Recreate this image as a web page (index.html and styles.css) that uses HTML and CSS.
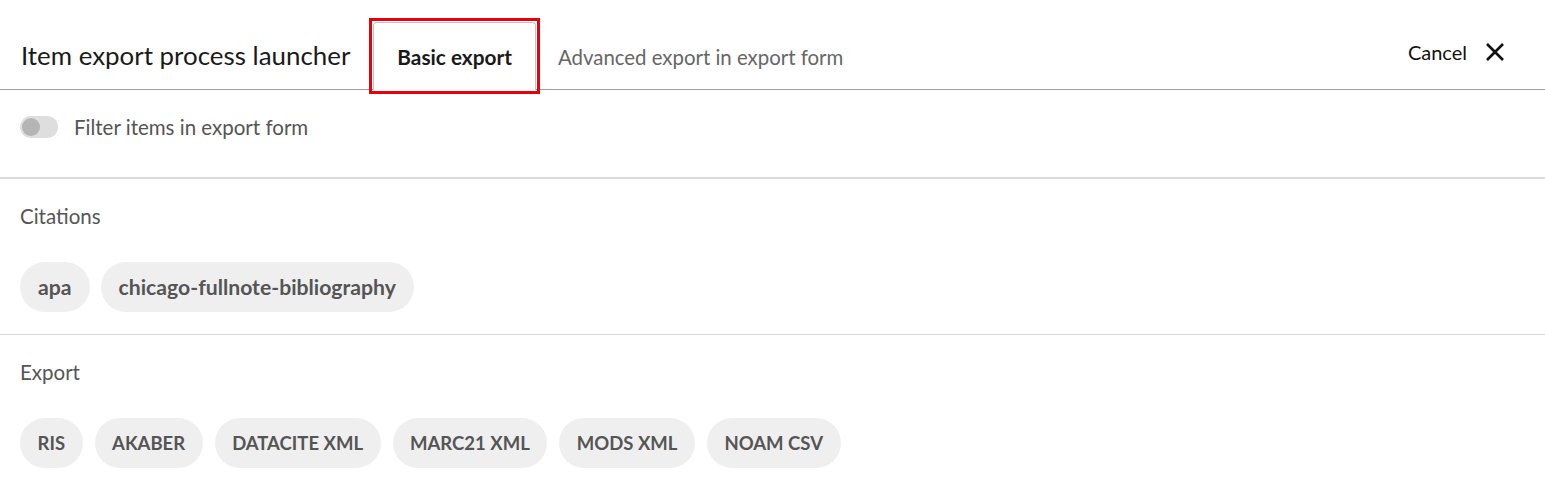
FILE: index.html
```html
<!DOCTYPE html>
<html lang="en">
<head>
<meta charset="utf-8">
<title>Item export process launcher</title>
<link rel="stylesheet" href="styles.css">
</head>
<body>
<div class="modal">
  <header class="modal-header">
    <h4 class="title">Item export process launcher</h4>
    <nav class="tabs">
      <a class="tab active">Basic export</a>
      <a class="tab">Advanced export in export form</a>
    </nav>
    <button class="close" type="button">
      <span class="close-label">Cancel</span>
      <svg class="close-icon" viewBox="0 0 20 20" width="20" height="20" aria-hidden="true">
        <path d="M2 2 L18 18 M18 2 L2 18" stroke="#111" stroke-width="2.6" stroke-linecap="butt" fill="none"/>
      </svg>
    </button>
  </header>
  <section class="filter-row">
    <span class="switch"><span class="knob"></span></span>
    <span class="filter-label">Filter items in export form</span>
  </section>
  <hr class="sep sep-thick">
  <section class="group">
    <div class="group-label">Citations</div>
    <div class="chips">
      <span class="chip">apa</span>
      <span class="chip">chicago-fullnote-bibliography</span>
    </div>
  </section>
  <hr class="sep">
  <section class="group">
    <div class="group-label">Export</div>
    <div class="chips chips-caps">
      <span class="chip">RIS</span>
      <span class="chip">AKABER</span>
      <span class="chip">DATACITE XML</span>
      <span class="chip">MARC21 XML</span>
      <span class="chip">MODS XML</span>
      <span class="chip">NOAM CSV</span>
    </div>
  </section>
</div>
</body>
</html>
```
FILE: styles.css
```css
* { box-sizing: border-box; }
html, body { margin: 0; padding: 0; background: #fff; }
body {
  font-family: "Lato", "Liberation Sans", sans-serif;
  color: #212529;
  width: 1545px;
  height: 486px;
  overflow: hidden;
}
.modal-header {
  display: flex;
  align-items: flex-end;
  height: 90px;
  border-bottom: 1px solid #9e9e9e;
  padding: 0 40px 0 21px;
}
.title {
  margin: 0 23px 18px 0;
  font-size: 25.9px;
  font-weight: 400;
  line-height: 32px;
  color: #1a1a1a;
}
.tabs {
  display: flex;
  align-items: flex-end;
  flex: 1;
  margin-bottom: -1px;
}
.tab {
  position: relative;
  display: flex;
  align-items: center;
  height: 68px;
  font-size: 20.4px;
  color: #666;
  padding: 0 23px 0 21px;
  border: 1px solid transparent;
  border-bottom: none;
}
.tab.active {
  font-weight: 700;
  font-size: 20.8px;
  color: #1a1a1a;
  background: #fff;
  border-color: #c4c4c4;
  border-radius: 4px 4px 0 0;
  padding: 0 23px 0 23px;
}
.tab.active::after {
  content: "";
  position: absolute;
  left: -5px;
  right: -5px;
  top: -5px;
  bottom: -4px;
  border: 3px solid #e8000b;
  pointer-events: none;
}
.close {
  display: flex;
  align-items: center;
  gap: 18px;
  background: none;
  border: none;
  padding: 0;
  margin: 0 0 25px 0;
  font-family: inherit;
  font-size: 20px;
  color: #111;
  cursor: pointer;
}
.close-icon { display: block; }
.filter-row {
  display: flex;
  align-items: center;
  gap: 16px;
  height: 87px;
  padding: 0 20px 13px;
}
.switch {
  position: relative;
  display: inline-block;
  width: 38px;
  height: 22px;
  border-radius: 11px;
  background: #dedede;
}
.knob {
  position: absolute;
  left: 2px;
  top: 2px;
  width: 18px;
  height: 18px;
  border-radius: 50%;
  background: #b5b5b5;
}
.filter-label {
  font-size: 20.5px;
  color: #555;
}
.sep {
  margin: 0;
  border: none;
  border-top: 1px solid #d8d8d8;
}
.sep-thick { border-top: 2px solid #dcdcdc; }
.group {
  padding: 24px 20px 22px;
}
.group-label {
  font-size: 20.5px;
  line-height: 26px;
  color: #555;
  margin-bottom: 33px;
}
.chips {
  display: flex;
  gap: 11px;
}
.chips-caps { gap: 12px; }
.chip {
  display: inline-flex;
  align-items: center;
  height: 50px;
  padding: 0 18px;
  border-radius: 25px;
  background: #efefef;
  color: #555;
  font-size: 21.2px;
  font-weight: 700;
}
.chips-caps .chip { font-size: 18.5px; padding: 0 17.5px; }
```
